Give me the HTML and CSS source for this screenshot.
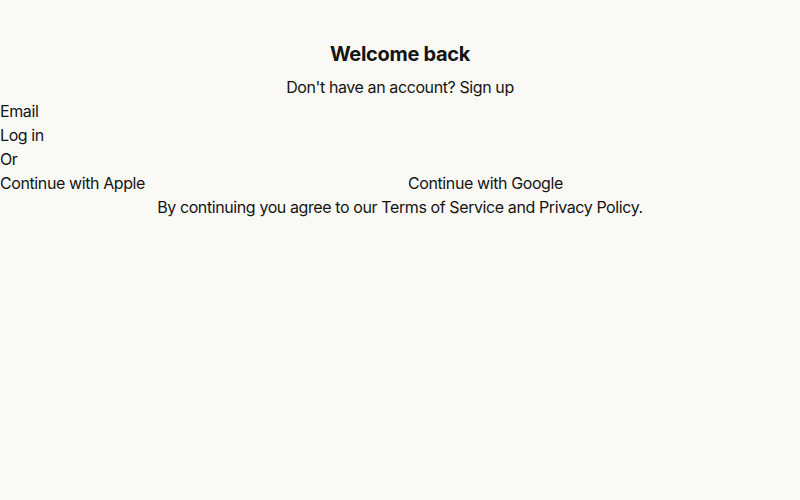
FILE: index.html
```html
<!DOCTYPE html>
<html>
<head>
<meta charset="utf-8">
<link rel="stylesheet" href="styles.css">
</head>
<body>
<main class="page">
  <h1 class="title">Welcome back</h1>
  <p class="center">Don't have an account? <a class="link" href="#">Sign up</a></p>
  <form class="form">
    <label class="row">Email</label>
    <div class="row">Log in</div>
  </form>
  <div class="row">Or</div>
  <div class="providers">
    <div class="row">Continue with Apple</div>
    <div class="row">Continue with Google</div>
  </div>
  <p class="center">By continuing you agree to our <a class="link" href="#">Terms of Service</a> and <a class="link" href="#">Privacy Policy</a>.</p>
</main>
</body>
</html>
```
FILE: styles.css
```css
html, body {
  margin: 0;
  padding: 0;
  background: #faf9f5;
  color: #141413;
  font-family: "Inter", "Liberation Sans", sans-serif;
  font-size: 16px;
  line-height: 24px;
  letter-spacing: -0.4px;
}
.page {
  padding-top: 40px;
}
.title {
  margin: 0 0 7px;
  font-size: 20px;
  line-height: 28px;
  font-weight: 700;
  letter-spacing: -0.3px;
  text-align: center;
}
.center {
  margin: 0;
  text-align: center;
}
.link {
  color: inherit;
  text-decoration: none;
}
.form {
  margin: 0;
}
.row {
  display: block;
}
.providers {
  display: grid;
  grid-template-columns: 1fr 1fr;
  column-gap: 16px;
}
```
